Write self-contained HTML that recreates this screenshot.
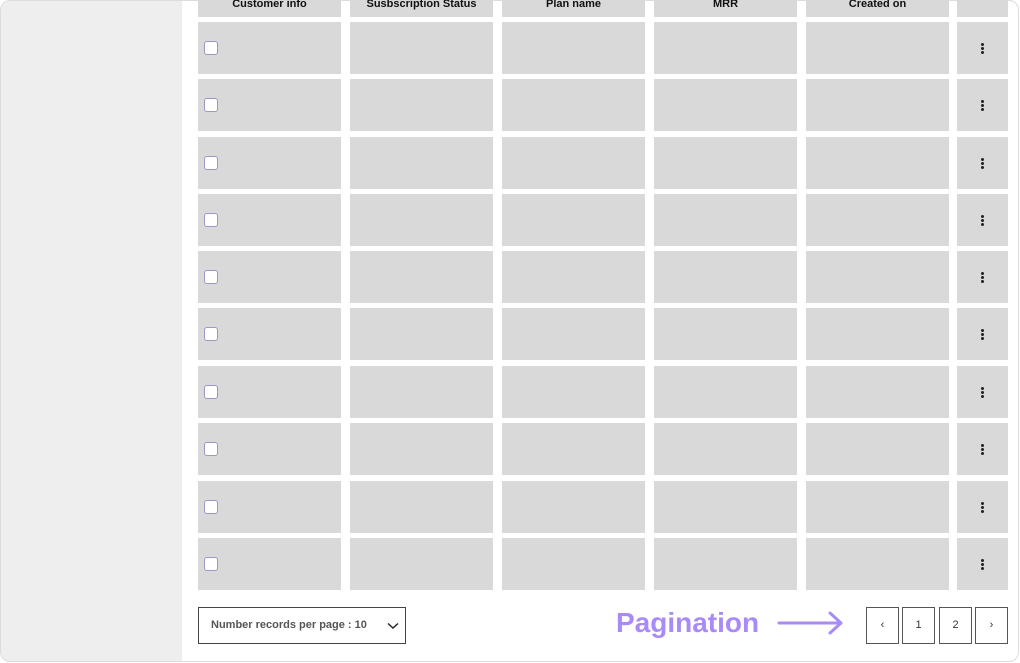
<!DOCTYPE html>
<html><head><style>
*{margin:0;padding:0;box-sizing:border-box}
body{width:1020px;height:663px;background:#fff;position:relative;overflow:hidden;font-family:"Liberation Sans",sans-serif}
.frame{position:absolute;left:0;top:0;width:1019px;height:662px;border:1px solid #dcdcdc;border-radius:10px;overflow:hidden;background:#fff}
.side{position:absolute;left:0;top:0;width:181px;height:100%;background:#eeeeee}
.c{position:absolute;background:#d9d9d9}
.h{position:absolute;top:0;height:17px;background:#d9d9d9;font-size:11px;font-weight:bold;color:#111;text-align:center;line-height:9px}
.cb{position:absolute;width:14px;height:14px;border:1px solid #9a98c8;border-radius:3px;background:#fff}
.k{position:absolute;width:3px}
.k i{display:block;width:3px;height:3px;background:#222;border-radius:50%;margin-bottom:1px}
.sel{position:absolute;left:198px;top:607px;width:208px;height:37px;border:1px solid #444;font-size:11px;font-weight:bold;color:#555;padding:11px 0 0 12px}
.pb{position:absolute;top:607px;width:33px;height:37px;border:1px solid #555;font-size:11px;color:#333;text-align:center;line-height:35px}
</style></head><body>
<div class="frame"><div class="side"></div></div>
<div class="h" style="left:198px;width:143px">Customer info</div>
<div class="h" style="left:350px;width:143px">Susbscription Status</div>
<div class="h" style="left:502px;width:143px">Plan name</div>
<div class="h" style="left:654px;width:143px">MRR</div>
<div class="h" style="left:806px;width:143px">Created on</div>
<div class="h" style="left:957px;width:51px"></div>
<div id="rows"></div>
<script>
var tops=[22,79,137,194,251,308,366,423,481,538],xs=[[198,143],[350,143],[502,143],[654,143],[806,143],[957,51]],h='';
tops.forEach(function(t){xs.forEach(function(x){h+='<div class="c" style="left:'+x[0]+'px;top:'+t+'px;width:'+x[1]+'px;height:52px"></div>'});
h+='<div class="cb" style="left:204px;top:'+(t+19)+'px"></div><div class="k" style="left:981px;top:'+(t+21)+'px"><i></i><i></i><i></i></div>';});
document.getElementById('rows').innerHTML=h;
</script>
<div class="sel">Number records per page : 10
<svg style="position:absolute;right:6px;top:14px" width="12" height="8" viewBox="0 0 12 8"><path d="M1 1.5 6 6 11 1.5" fill="none" stroke="#222" stroke-width="1.4"/></svg></div>
<div style="position:absolute;left:616px;top:607px;font-size:28px;font-weight:bold;color:#a98bf7">Pagination</div>
<svg style="position:absolute;left:776px;top:610px" width="70" height="28" viewBox="0 0 70 28"><path d="M3 13h62M54 3l11 10-11 10" fill="none" stroke="#a98bf7" stroke-width="3" stroke-linecap="round" stroke-linejoin="round"/></svg>
<div class="pb" style="left:866px">‹</div>
<div class="pb" style="left:902px">1</div>
<div class="pb" style="left:939px">2</div>
<div class="pb" style="left:975px">›</div>
</body></html>
